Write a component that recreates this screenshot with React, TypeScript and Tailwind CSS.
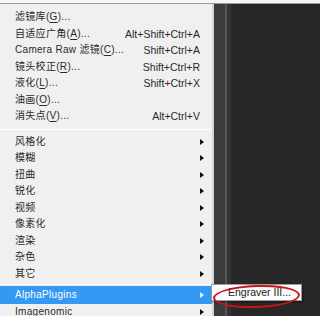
import React from 'react';

type Item =
  | { kind: 'item'; label: string; shortcut?: string; sub?: boolean; active?: boolean }
  | { kind: 'sep'; h: string };

const items: Item[] = [
  { kind: 'item', label: '滤镜库(G)...' },
  { kind: 'item', label: '自适应广角(A)...', shortcut: 'Alt+Shift+Ctrl+A' },
  { kind: 'item', label: 'Camera Raw 滤镜(C)...', shortcut: 'Shift+Ctrl+A' },
  { kind: 'item', label: '镜头校正(R)...', shortcut: 'Shift+Ctrl+R' },
  { kind: 'item', label: '液化(L)...', shortcut: 'Shift+Ctrl+X' },
  { kind: 'item', label: '油画(O)...' },
  { kind: 'item', label: '消失点(V)...', shortcut: 'Alt+Ctrl+V' },
  { kind: 'sep', h: 'h-[9px]' },
  { kind: 'item', label: '风格化', sub: true },
  { kind: 'item', label: '模糊', sub: true },
  { kind: 'item', label: '扭曲', sub: true },
  { kind: 'item', label: '锐化', sub: true },
  { kind: 'item', label: '视频', sub: true },
  { kind: 'item', label: '像素化', sub: true },
  { kind: 'item', label: '渲染', sub: true },
  { kind: 'item', label: '杂色', sub: true },
  { kind: 'item', label: '其它', sub: true },
  { kind: 'sep', h: 'h-[4px]' },
  { kind: 'item', label: 'AlphaPlugins', sub: true, active: true },
  { kind: 'item', label: 'Imagenomic', sub: true },
];

// keyboard mnemonic: underline the letter inside the brackets
function Label({ text }: { text: string }) {
  const m = text.match(/^(.*\()(.)(\).*)$/);
  if (!m) return <>{text}</>;
  return (
    <>
      {m[1]}
      <span className="underline underline-offset-2">{m[2]}</span>
      {m[3]}
    </>
  );
}

function Arrow({ light }: { light?: boolean }) {
  return (
    <span
      className={`block w-0 h-0 border-y-[3.5px] border-y-transparent border-l-[4px] ${
        light ? 'border-l-[#e8f2ff]' : 'border-l-[#111]'
      }`}
    />
  );
}

export default function App() {
  return (
    <div
      className="relative w-[320px] h-[316px] overflow-hidden bg-[#262626] flex flex-col"
      style={{ fontFamily: '"Liberation Sans", "Noto Sans CJK SC", sans-serif' }}
    >
      {/* top edge of the window above the menu */}
      <div className="h-[4px] bg-[#f6f6f6] border-b border-[#9a9a9a] shrink-0" />

      <div className="flex flex-1 min-h-0">
        {/* Filter menu */}
        <div className="w-[212px] shrink-0 bg-[#f0f0f0] pt-[5px] text-[10px] text-[#2a2a2a] tracking-[0.3px]">
          {items.map((it, i) =>
            it.kind === 'sep' ? (
              <div key={i} className={`${it.h} flex items-center`}>
                <div className="w-full h-px bg-[#c4c4c4] border-b border-white" />
              </div>
            ) : (
              <div
                key={i}
                className={`${it.active ? 'h-[18px] bg-[#3399f3] text-white' : 'h-[16.5px]'} flex items-center pl-[15px] pr-[4px] shrink-0`}
              >
                <span className="flex-1 whitespace-nowrap leading-none">
                  <Label text={it.label} />
                </span>
                {it.shortcut && (
                  <span className="whitespace-nowrap leading-none mr-[8px] tracking-normal text-[10.5px]">{it.shortcut}</span>
                )}
                {it.sub && (
                  <span className="w-[8px] flex justify-start">
                    <Arrow light={it.active} />
                  </span>
                )}
              </div>
            )
          )}
        </div>

        {/* panel edge behind the menu */}
        <div className="w-[2px] bg-[#cdd5da]" />
        <div className="w-[11px] bg-[#3b3b3b]" />
        <div className="w-[2px] bg-[#575757]" />
        <div className="w-[4px] bg-[#333333]" />
        <div className="flex-1 bg-[#272727]" />
      </div>

      {/* AlphaPlugins submenu */}
      <div className="absolute left-[211px] top-[284px] w-[91px] h-[17px] bg-[#fbfbfb] border border-[#9c9c9c] shadow-[1px_1px_2px_rgba(0,0,0,0.5)] flex items-center pl-[16px] text-[10.5px] text-[#222] leading-none whitespace-nowrap">
        Engraver III...
      </div>
      {/* red highlight ring */}
      <div className="absolute left-[213px] top-[285px] w-[87px] h-[23px] rounded-[50%] border-[2.5px] border-[#c8151b] -rotate-2" />
    </div>
  );
}
